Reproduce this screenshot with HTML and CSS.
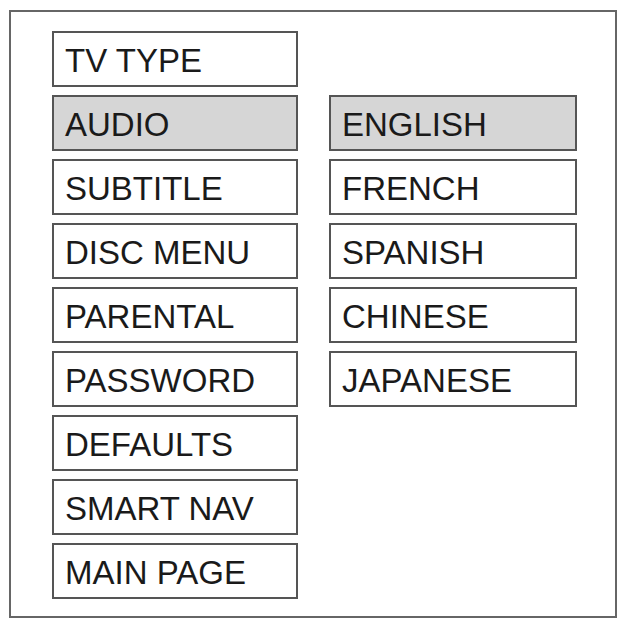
FILE: index.html
```html
<!DOCTYPE html>
<html lang="en">
<head>
  <meta charset="UTF-8">
  <title>Setup Menu</title>
  <link rel="stylesheet" href="styles.css">
</head>
<body>

  <div class="frame">
    <div class="menu">
      <div class="item">TV TYPE</div>
      <div class="item active">AUDIO</div>
      <div class="item">SUBTITLE</div>
      <div class="item">DISC MENU</div>
      <div class="item">PARENTAL</div>
      <div class="item">PASSWORD</div>
      <div class="item">DEFAULTS</div>
      <div class="item">SMART NAV</div>
      <div class="item">MAIN PAGE</div>
    </div>

    <div class="menu sub">
      <div class="item active">ENGLISH</div>
      <div class="item">FRENCH</div>
      <div class="item">SPANISH</div>
      <div class="item">CHINESE</div>
      <div class="item">JAPANESE</div>
    </div>
  </div>

</body>
</html>
```

FILE: styles.css
```css
body {
  margin: 0;
  background-color: #fff;
  font-family: "Liberation Sans", Arial, sans-serif;
  color: #1a1a1a;
}
.frame {
  box-sizing: border-box;
  width: 608px;
  height: 608px;
  margin: 10px 0 0 9px;
  padding: 19px 0 0 41px;
  border: 2px solid #666;
  display: flex;
  gap: 31px;
  align-items: flex-start;
}
.menu {
  display: flex;
  flex-direction: column;
  gap: 8px;
  width: 246px;
}
.menu.sub {
  width: 248px;
  margin-top: 64px;
}
.item {
  box-sizing: border-box;
  height: 56px;
  padding: 4px 11px 0;
  border: 2px solid #555;
  background-color: #fff;
  display: flex;
  align-items: center;
  font-size: 33px;
}
.item.active {
  background-color: #d6d6d6;
}
```
